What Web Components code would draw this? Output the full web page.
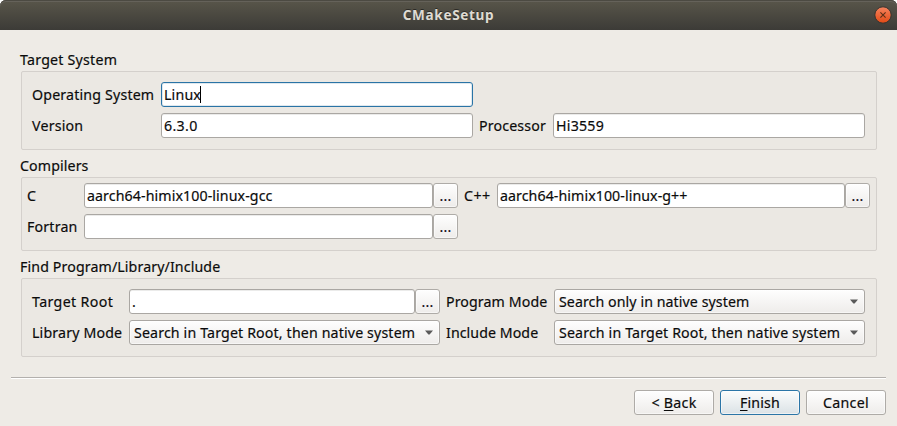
<!DOCTYPE html>
<html lang="en">
<head>
<meta charset="utf-8">
<title>CMakeSetup</title>
<style>
html,body{margin:0;padding:0;background:#fff}
body{width:897px;height:426px;overflow:hidden;font:14.2px "Noto Sans","Open Sans",sans-serif;color:#0b0b0b}
</style>
</head>
<body>
<setup-window></setup-window>
<script>
const ctx = document.createElement('canvas').getContext('2d');
const FAMILY = '"Noto Sans","Open Sans",sans-serif';

class Base extends HTMLElement {
  constructor() {
    super();
    this.attachShadow({ mode: 'open' });
  }
  paint(css, html) {
    this.shadowRoot.innerHTML = `<style>${css}</style>${html}`;
  }
}

/* Single line of text tracked to a given width. */
customElements.define('ui-text', class extends Base {
  connectedCallback() {
    const text = this.textContent;
    const bold = this.hasAttribute('bold');
    ctx.font = `${bold ? 'bold 13.6px' : '14.2px'} ${FAMILY}`;
    const spacing = (Number(this.getAttribute('w')) - ctx.measureText(text).width) / text.length;
    this.paint(`
      :host{display:block;white-space:pre;line-height:25px;height:25px;letter-spacing:${spacing.toFixed(3)}px;-webkit-text-stroke:.18px currentColor}
      :host([bold]){font-weight:bold;font-size:13.6px;-webkit-text-stroke:0;margin-top:-2px}
      ::slotted(u){text-decoration:underline;text-decoration-thickness:1px;text-underline-offset:2px;text-decoration-skip-ink:none}
    `, '<slot></slot>');
  }
});

customElements.define('ui-label', class extends Base {
  connectedCallback() {
    this.paint(':host{display:block;min-width:0;height:25px}:host([gap]){padding-left:6px}', '<slot></slot>');
  }
});

customElements.define('ui-field', class extends Base {
  connectedCallback() {
    this.paint(`
      :host{display:flex;flex:1;min-width:0;box-sizing:border-box;height:25px;border:1px solid #aaa7a3;border-radius:3px;
        background:#fff;box-shadow:inset 0 1px 0 #ebebea;padding-left:2px;align-items:center}
      :host([focused]){border-color:#2a74a6;box-shadow:inset 0 0 0 1px #dfe8ee}
      .caret{width:1px;height:17px;background:#000;margin-left:-1px}
    `, `<slot></slot>${this.hasAttribute('focused') ? '<span class="caret"></span>' : ''}`);
  }
});

customElements.define('ui-button', class extends Base {
  connectedCallback() {
    this.paint(`
      :host{display:flex;flex:none;box-sizing:border-box;width:80px;height:25px;border:1px solid #aeaba7;border-radius:3px;
        background:linear-gradient(#fefefe,#eeecea);box-shadow:inset 0 0 0 1px #ffffff80;align-items:center;justify-content:center}
      :host([small]){width:25px}
      :host([default]){border-color:#2b75a7;background:linear-gradient(#fbfcfc,#dbe2e6)}
    `, '<slot></slot>');
  }
});

customElements.define('ui-combo', class extends Base {
  connectedCallback() {
    this.paint(`
      :host{display:flex;flex:1;min-width:0;box-sizing:border-box;height:25px;border:1px solid #aaa7a3;border-radius:3px;
        background:linear-gradient(#fefefe,#eeecea);box-shadow:inset 0 0 0 1px #ffffff80;
        align-items:center;justify-content:space-between;padding:0 6px 0 4px}
      svg{display:block;flex:none}
    `, '<slot></slot><svg width="8" height="5" viewBox="0 0 8 5"><path d="M0 .5H8L4.6 4.5H3.4Z" fill="#5a5a5a"/></svg>');
  }
});

customElements.define('ui-row', class extends Base {
  connectedCallback() {
    this.paint(':host{display:flex;min-width:0}', '<slot></slot>');
  }
});

customElements.define('ui-group', class extends Base {
  connectedCallback() {
    this.paint(`
      :host{display:block}
      .caption{height:24px;margin-left:-1px}
      .frame{box-sizing:border-box;height:${this.getAttribute('h')}px;border:1px solid #d4d0cc;border-radius:2px;background:#ebe8e3;
        padding:${this.getAttribute('pad')}px;display:grid;grid-template-columns:${this.getAttribute('cols')};
        grid-auto-rows:25px;row-gap:6px;align-content:start}
    `, `<div class="caption"><slot name="caption"></slot></div><div class="frame"><slot></slot></div>`);
  }
});

customElements.define('title-bar', class extends Base {
  connectedCallback() {
    this.paint(`
      :host{display:grid;grid-template-columns:1fr auto 1fr;align-items:center;box-sizing:border-box;height:30px;padding:0 5px;
        border-radius:6px 6px 0 0;background:linear-gradient(#59564a,#3c3b37);box-shadow:inset 0 1px 0 #4c4a42,inset 0 2px 0 #65625a;
        color:#dfdbd2;text-shadow:0 -1px 0 #2b2a26}
      svg{grid-column:3;justify-self:end;display:block}
    `, `<span></span><slot></slot>
      <svg width="18" height="18" viewBox="0 0 18 18">
        <defs><linearGradient id="g" x2="0" y2="1"><stop stop-color="#f48460"/><stop offset=".5" stop-color="#ee6739"/><stop offset="1" stop-color="#df4a16"/></linearGradient></defs>
        <circle cx="9" cy="9" r="8.2" fill="url(#g)" stroke="#35332f" stroke-width="1"/>
        <path d="M6.4 6.4 11.6 11.6M11.6 6.4 6.4 11.6" stroke="#5a3018" stroke-width="1.1"/>
      </svg>`);
  }
});

customElements.define('setup-window', class extends Base {
  connectedCallback() {
    const pick = '<ui-button small><ui-text w="12">...</ui-text></ui-button>';
    this.paint(`
      :host{display:flex;flex-direction:column;box-sizing:border-box;width:897px;height:426px;
        background:linear-gradient(#fff 0 10px,#eeebe6 10px)}
      main{display:flex;flex-direction:column;gap:3px;padding:17px 20px 0 21px}
      hr{width:875px;height:1px;margin:20px 0 0 11px;border:0;background:#b3b0ad;box-shadow:0 1px 0 #fff}
      footer{display:flex;justify-content:flex-end;gap:6px;padding:12px 11px 0 0}
    `, `
      <title-bar><ui-text bold w="91.5">CMakeSetup</ui-text></title-bar>
      <main>
        <ui-group h="79" pad="10" cols="129px 312px 80px 312px">
          <ui-text slot="caption" w="97.2">Target System</ui-text>
          <ui-label><ui-text w="122.3">Operating System</ui-text></ui-label>
          <ui-field focused><ui-text w="37">Linux</ui-text></ui-field>
          <span></span><span></span>
          <ui-label><ui-text w="51.3">Version</ui-text></ui-label>
          <ui-field><ui-text w="33.7">6.3.0</ui-text></ui-field>
          <ui-label gap><ui-text w="67">Processor</ui-text></ui-label>
          <ui-field><ui-text w="48">Hi3559</ui-text></ui-field>
        </ui-group>
        <ui-group h="74" pad="5" cols="57px 374px 39px 373px">
          <ui-text slot="caption" w="68.5">Compilers</ui-text>
          <ui-label><ui-text w="10">C</ui-text></ui-label>
          <ui-row><ui-field><ui-text w="185.5">aarch64-himix100-linux-gcc</ui-text></ui-field>${pick}</ui-row>
          <ui-label gap><ui-text w="26.5">C++</ui-text></ui-label>
          <ui-row><ui-field><ui-text w="187.5">aarch64-himix100-linux-g++</ui-text></ui-field>${pick}</ui-row>
          <ui-label><ui-text w="50.5">Fortran</ui-text></ui-label>
          <ui-row><ui-field></ui-field>${pick}</ui-row>
        </ui-group>
        <ui-group h="79" pad="10" cols="97px 311px 114px 311px">
          <ui-text slot="caption" w="200.3">Find Program/Library/Include</ui-text>
          <ui-label><ui-text w="81.2">Target Root</ui-text></ui-label>
          <ui-row><ui-field><ui-text w="4">.</ui-text></ui-field>${pick}</ui-row>
          <ui-label gap><ui-text w="101.3">Program Mode</ui-text></ui-label>
          <ui-combo><ui-text w="190.3">Search only in native system</ui-text></ui-combo>
          <ui-label><ui-text w="90.2">Library Mode</ui-text></ui-label>
          <ui-combo><ui-text w="281.2">Search in Target Root, then native system</ui-text></ui-combo>
          <ui-label gap><ui-text w="92.2">Include Mode</ui-text></ui-label>
          <ui-combo><ui-text w="281.2">Search in Target Root, then native system</ui-text></ui-combo>
        </ui-group>
      </main>
      <hr>
      <footer>
        <ui-button><ui-text w="45">&lt; <u>B</u>ack</ui-text></ui-button>
        <ui-button default><ui-text w="40"><u>F</u>inish</ui-text></ui-button>
        <ui-button><ui-text w="46">Cancel</ui-text></ui-button>
      </footer>`);
  }
});
</script>
</body>
</html>
